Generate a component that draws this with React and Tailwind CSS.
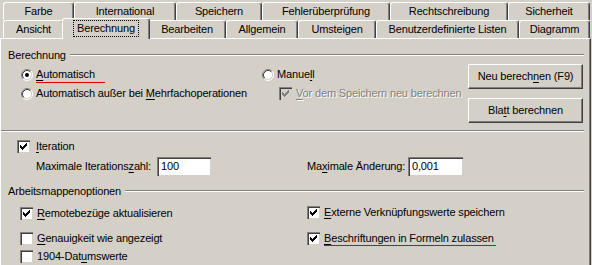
const face = { fontFamily: '"Liberation Sans", Arial, sans-serif' }

function Label({ text }) {
  // "&" marks the access key letter
  const i = text.indexOf("&")
  if (i < 0) return <span>{text}</span>
  return (
    <span>
      {text.slice(0, i)}
      <span className="underline decoration-1 underline-offset-[2px]">{text[i + 1]}</span>
      {text.slice(i + 2)}
    </span>
  )
}

function Tab({ w, children, selected }) {
  if (selected) {
    return (
      <div className={`relative z-10 -mx-[2px] -mt-[2px] -mb-[1px] h-[21px] ${w} bg-[#d4d0c8] border-t border-l border-white border-r border-r-[#404040] rounded-t-[3px] shadow-[inset_-1px_0_0_#808080] flex items-start justify-center pt-[1px]`}>
        <span className="px-[3px] h-[17px] leading-[15px] border border-dotted border-black">{children}</span>
      </div>
    )
  }
  return (
    <div className={`h-full ${w} bg-[#d4d0c8] border-t border-l border-white border-r border-r-[#404040] rounded-t-[3px] shadow-[inset_-1px_0_0_#808080] flex items-center justify-center`}>
      {children}
    </div>
  )
}

function Radio({ checked }) {
  return (
    <svg width="12" height="12" viewBox="0 0 12 12" className="shrink-0">
      <circle cx="6" cy="6" r="4.5" fill="#fff" />
      <path d="M2.11 9.89 A5.5 5.5 0 0 1 9.89 2.11" fill="none" stroke="#808080" />
      <path d="M9.89 2.11 A5.5 5.5 0 0 1 2.11 9.89" fill="none" stroke="#fff" />
      <path d="M2.82 9.18 A4.5 4.5 0 0 1 9.18 2.82" fill="none" stroke="#404040" />
      <path d="M9.18 2.82 A4.5 4.5 0 0 1 2.82 9.18" fill="none" stroke="#d4d0c8" />
      {checked && <circle cx="6" cy="6" r="2" fill="#000" />}
    </svg>
  )
}

const checkCols = [[3, 5], [4, 6], [5, 7], [6, 6], [7, 5], [8, 4], [9, 3]]

function Check({ checked, disabled }) {
  return (
    <div className={`w-[13px] h-[13px] shrink-0 border-t border-l border-[#808080] border-b-white border-r-white shadow-[inset_1px_1px_0_#404040,inset_-1px_-1px_0_#d4d0c8] ${disabled ? "bg-[#d4d0c8]" : "bg-white"} relative`}>
      {checked && (
        <svg width="13" height="13" viewBox="0 0 13 13" className="absolute -left-[1px] -top-[1px]">
          {checkCols.map(([x, y]) => (
            <rect key={x} x={x} y={y} width="1" height="3" fill={disabled ? "#808080" : "#000"} />
          ))}
        </svg>
      )}
    </div>
  )
}

function Field({ value, w }) {
  return (
    <div className={`${w} h-[19px] bg-white border-t border-l border-[#808080] border-b-white border-r-white shadow-[inset_1px_1px_0_#404040,inset_-1px_-1px_0_#d4d0c8] pl-[3px] leading-[17px]`}>
      {value}
    </div>
  )
}

function Button({ children }) {
  return (
    <div className="w-[115px] h-[25px] bg-[#d4d0c8] border-t border-l border-white border-r border-b border-r-[#404040] border-b-[#404040] shadow-[inset_-1px_-1px_0_#808080] flex items-center justify-center">
      {children}
    </div>
  )
}

function Group({ title }) {
  return (
    <div className="flex items-center h-[14px] pl-[7px] pr-[6px]">
      <span className="pr-[4px]">{title}</span>
      <div className="flex-1 h-[2px] border-t border-[#808080] border-b border-b-white" />
    </div>
  )
}

export default function App() {
  return (
    <div style={face} className="w-[592px] h-[265px] overflow-hidden bg-[#d4d0c8] text-[11px] tracking-[-0.15px] text-black select-none">
      {/* top tab row */}
      <div className="flex h-[20px] pt-[2px] pl-[3px]">
        <Tab w="w-[71px]">Farbe</Tab>
        <Tab w="w-[102px]">International</Tab>
        <Tab w="w-[86px]">Speichern</Tab>
        <Tab w="w-[128px]">Fehlerüberprüfung</Tab>
        <Tab w="w-[118px]">Rechtschreibung</Tab>
        <Tab w="w-[82px]">Sicherheit</Tab>
      </div>
      {/* front tab row */}
      <div className="flex h-[18px] pl-[3px]">
        <Tab w="w-[61px]">Ansicht</Tab>
        <Tab w="w-[88px]" selected>Berechnung</Tab>
        <Tab w="w-[78px]">Bearbeiten</Tab>
        <Tab w="w-[72px]">Allgemein</Tab>
        <Tab w="w-[78px]">Umsteigen</Tab>
        <Tab w="w-[143px]">Benutzerdefinierte Listen</Tab>
        <Tab w="w-[71px]">Diagramm</Tab>
      </div>

      {/* page */}
      <div className="w-[591px] h-[240px] border-t border-l border-white border-r border-r-[#404040] shadow-[inset_-1px_0_0_#808080] pt-[9px]">
        <Group title="Berechnung" />

        <div className="flex h-[63px]">
          <div className="w-[261px] pl-[20px] pt-[3px]">
            <div className="flex items-center gap-[3px] h-[19px]">
              <Radio checked />
              <span className="relative">
                <Label text="&Automatisch" />
                <span className="absolute left-0 -right-[10px] top-[16px] h-px bg-[#e00000]" />
              </span>
            </div>
            <div className="flex items-center gap-[3px] h-[19px]">
              <Radio />
              <Label text="Automatisch außer bei &Mehrfachoperationen" />
            </div>
          </div>
          <div className="flex-1 pt-[3px]">
            <div className="flex items-center gap-[3px] h-[19px]">
              <Radio />
              <Label text="Manue&ll" />
            </div>
            <div className="flex items-center gap-[4px] h-[19px] pl-[17px] text-[#808080] [text-shadow:1px_1px_0_#fff]">
              <Check checked disabled />
              <Label text="&Vor dem Speichern neu berechnen" />
            </div>
          </div>
          <div className="flex flex-col gap-[9px] pt-[2px] pr-[7px]">
            <Button><Label text="Neu berech&nen (F9)" /></Button>
            <Button><Label text="Bla&tt berechnen" /></Button>
          </div>
        </div>

        <div className="mt-[5px] mr-[6px] h-[2px] border-t border-[#808080] border-b border-b-white" />

        <div className="flex items-center gap-[6px] h-[16px] mt-[6px] pl-[16px]">
          <Check checked />
          <Label text="&Iteration" />
        </div>
        <div className="flex items-center h-[19px] mt-[3px]">
          <div className="w-[306px] flex items-center pl-[35px]">
            <span className="w-[121px]"><Label text="Maximale Iterations&zahl:" /></span>
            <Field value="100" w="w-[54px]" />
          </div>
          <span className="w-[101px]"><Label text="Ma&ximale Änderung:" /></span>
          <Field value="0,001" w="w-[55px]" />
        </div>

        <div className="mt-[8px]">
          <Group title="Arbeitsmappenoptionen" />
        </div>

        <div className="flex">
          <div className="w-[306px] pl-[19px]">
            <div className="flex items-center gap-[4px] h-[16px] mt-[7px]">
              <Check checked />
              <Label text="&Remotebezüge aktualisieren" />
            </div>
            <div className="flex items-center gap-[4px] h-[16px] mt-[9px]">
              <Check />
              <Label text="&Genauigkeit wie angezeigt" />
            </div>
            <div className="flex items-center gap-[4px] h-[16px] mt-[2px]">
              <Check />
              <Label text="1904-Dat&umswerte" />
            </div>
          </div>
          <div>
            <div className="flex items-center gap-[4px] h-[16px] mt-[6px]">
              <Check checked />
              <Label text="&Externe Verknüpfungswerte speichern" />
            </div>
            <div className="flex items-center gap-[4px] h-[16px] mt-[10px]">
              <Check checked />
              <span className="relative">
                <Label text="&Beschriftungen in Formeln zulassen" />
                <span className="absolute left-0 -right-[2px] top-[15px] h-px bg-[#e00000]" />
              </span>
            </div>
          </div>
        </div>
      </div>
    </div>
  )
}
